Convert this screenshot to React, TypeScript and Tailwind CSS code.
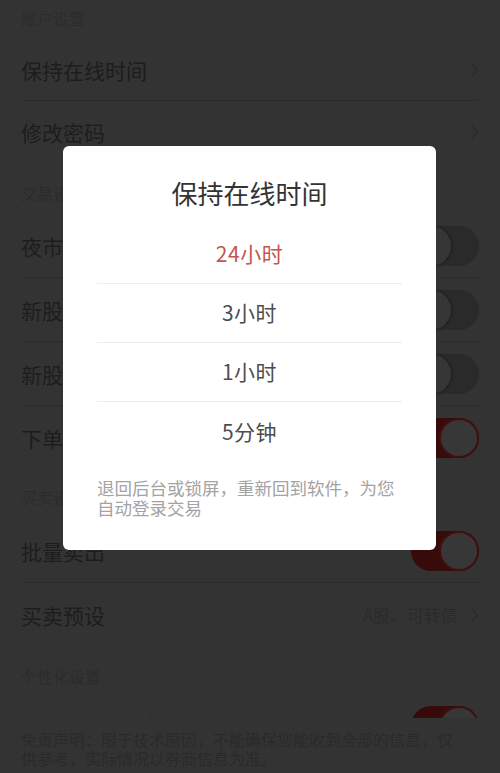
import React from "react";

const font = "font-['Noto_Sans_CJK_SC','Noto_Sans',sans-serif]";

function Chevron({ gap = "ml-[8px]" }: { gap?: string }) {
  return (
    <svg width="9" height="16" viewBox="0 0 9 16" className={`${gap} shrink-0`}>
      <polyline
        points="1.5,1.5 7.5,8 1.5,14.5"
        fill="none"
        stroke="#2b2b2b"
        strokeWidth="1.4"
        strokeLinecap="round"
        strokeLinejoin="round"
      />
    </svg>
  );
}

function Toggle({ on }: { on: boolean }) {
  return on ? (
    <div className="flex h-[40px] w-[68px] shrink-0 items-center justify-end rounded-full bg-[#380b0b]">
      <div className="h-[40px] w-[40px] rounded-full border-2 border-[#420e0e] bg-[#373737]" />
    </div>
  ) : (
    <div className="flex h-[40px] w-[68px] shrink-0 items-center justify-start rounded-full bg-[#2a2a2a]">
      <div className="h-[40px] w-[40px] rounded-full bg-[#363636] shadow-[1px_0_3px_rgba(0,0,0,0.35)]" />
    </div>
  );
}

function Header({ label, h, pt }: { label: string; h: string; pt: string }) {
  return (
    <div className={`${h} ${pt} px-[21px] text-[16px] leading-5 text-[#2c2c2c]`}>
      {label}
    </div>
  );
}

function Row({
  label,
  h,
  divider,
  right,
}: {
  label: string;
  h: string;
  divider?: boolean;
  right: React.ReactNode;
}) {
  return (
    <div className="px-[21px]">
      <div
        className={`flex ${h} items-center justify-between ${
          divider ? "border-b border-[#2c2c2c]" : ""
        }`}
      >
        <span className="text-[21px] leading-7 text-[#1d1d1d]">{label}</span>
        {right}
      </div>
    </div>
  );
}

const options = ["24小时", "3小时", "1小时", "5分钟"];

export default function App() {
  return (
    <div className={`relative h-[773px] w-[500px] overflow-hidden bg-[#333333] ${font}`}>
      <Header label="账户设置" h="h-[39px]" pt="pt-[8px]" />
      <Row label="保持在线时间" h="h-[62px]" divider right={<Chevron />} />
      <Row label="修改密码" h="h-[62px]" right={<Chevron />} />

      <Header label="交易设置" h="h-[51px]" pt="pt-[20px]" />
      <Row label="夜市委托提醒" h="h-[64px]" divider right={<Toggle on={false} />} />
      <Row label="新股申购提醒" h="h-[64px]" divider right={<Toggle on={false} />} />
      <Row label="新股中签提醒" h="h-[64px]" divider right={<Toggle on={false} />} />
      <Row label="下单确认" h="h-[64px]" right={<Toggle on />} />

      <Header label="买卖设置" h="h-[49px]" pt="pt-[17px]" />
      <Row label="批量卖出" h="h-[64px]" divider right={<Toggle on />} />
      <Row
        label="买卖预设"
        h="h-[64px]"
        right={
          <div className="flex items-center">
            <span className="text-[17px] text-[#2b2b2b]">A股、可转债</span>
            <Chevron gap="ml-[12px]" />
          </div>
        }
      />

      <Header label="个性化设置" h="h-[49px]" pt="pt-[19px]" />
      <Row label="持仓盈亏颜色提醒" h="h-[60px]" right={<Toggle on />} />

      {/* disclaimer footer */}
      <div className="absolute bottom-0 left-0 h-[55px] w-full bg-[#333333] px-[21px] pt-[12px] text-[16px] leading-[19px] text-[#2a2a2a]">
        免责声明：限于技术原因，不能确保您能收到全部的信息，仅
        <br />
        供参考，实际情况以券商信息为准。
      </div>

      {/* dialog */}
      <div className="absolute left-[63px] top-[146px] h-[404px] w-[373px] rounded-[6px] bg-white">
        <div className="pb-[16px] pt-[31px] text-center text-[26px] leading-8 text-[#333333]">
          保持在线时间
        </div>
        <div className="px-[34px]">
          {options.map((o, i) => (
            <div
              key={o}
              className={`flex h-[59px] items-center justify-center text-[21px] tracking-[0.5px] ${
                i === 0 ? "text-[#c4554f]" : "text-[#4d4d4d]"
              } ${i < options.length - 1 ? "border-b border-[#ececec]" : ""}`}
            >
              {o}
            </div>
          ))}
          <p className="mt-[17px] text-[17.5px] leading-5 text-[#a3a3a3]">
            退回后台或锁屏，重新回到软件，为您
            <br />
            自动登录交易
          </p>
        </div>
      </div>
    </div>
  );
}
